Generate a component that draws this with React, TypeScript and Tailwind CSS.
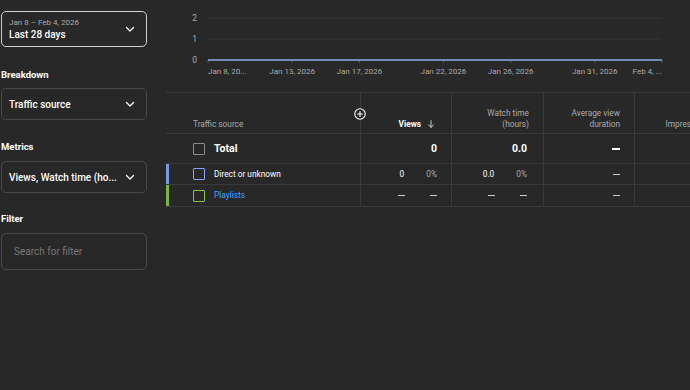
import React from 'react';

const Chevron = () => (
  <svg width="12" height="12" viewBox="0 0 24 24" fill="none" stroke="#fff" strokeWidth="2.5" strokeLinecap="round" strokeLinejoin="round">
    <path d="M5 9l7 7 7-7" />
  </svg>
);

const SelectBox = ({ children, className = '' }: { children: React.ReactNode; className?: string }) => (
  <div className={`flex items-center justify-between rounded-[5px] border pl-[7px] pr-[10px] ${className}`}>
    <div className="whitespace-nowrap">{children}</div>
    <Chevron />
  </div>
);

const Sidebar = () => (
  <aside className="w-[147px] shrink-0 pl-px pt-[11px]">
    <SelectBox className="h-[36px] border-[#d0d0d0]">
      <div className="text-[8px] leading-[11px] text-[#aaaaaa]">Jan 8 – Feb 4, 2026</div>
      <div className="text-[10px] leading-[14px] font-medium text-white">Last 28 days</div>
    </SelectBox>

    <div className="mt-[21px] text-[9.5px] font-bold text-white leading-[14px]">Breakdown</div>
    <SelectBox className="mt-[6px] h-[32px] border-[#4a4a4a]">
      <div className="text-[10px] font-medium text-white">Traffic source</div>
    </SelectBox>

    <div className="mt-[20px] text-[9.5px] font-bold text-white leading-[14px]">Metrics</div>
    <SelectBox className="mt-[7px] h-[32px] border-[#4a4a4a]">
      <div className="text-[10px] font-medium text-white">Views, Watch time (ho...</div>
    </SelectBox>

    <div className="mt-[19px] text-[9.5px] font-bold text-white leading-[14px]">Filter</div>
    <div className="mt-[7px] flex h-[37px] items-center rounded-[5px] border border-[#4a4a4a] pl-3">
      <span className="text-[10px] text-[#777777]">Search for filter</span>
    </div>
  </aside>
);

const x0 = 42;
const dayW = (496 - 42) / 27;
const ticks = [0, 5, 9, 14, 18, 23, 27];
const labels = [
  { d: 0, t: 'Jan 8, 20...', a: 'start' },
  { d: 5, t: 'Jan 13, 2026', a: 'middle' },
  { d: 9, t: 'Jan 17, 2026', a: 'middle' },
  { d: 14, t: 'Jan 22, 2026', a: 'middle' },
  { d: 18, t: 'Jan 26, 2026', a: 'middle' },
  { d: 23, t: 'Jan 31, 2026', a: 'middle' },
  { d: 27, t: 'Feb 4, ...', a: 'end' },
];

const Chart = () => (
  <svg width="524" height="92" className="block" fontFamily="Roboto, sans-serif">
    {[{ v: '2', y: 18 }, { v: '1', y: 39 }].map((g) => (
      <g key={g.v}>
        <text x="31" y={g.y + 3} fontSize="8.5" fill="#aaaaaa" textAnchor="end">{g.v}</text>
        <line x1={x0} x2="496" y1={g.y} y2={g.y} stroke="#363636" strokeWidth="1" />
      </g>
    ))}
    <text x="31" y="63" fontSize="8.5" fill="#aaaaaa" textAnchor="end">0</text>
    {ticks.map((d) => (
      <line key={d} x1={x0 + d * dayW} x2={x0 + d * dayW} y1="60" y2="63" stroke="#555555" />
    ))}
    <line x1={x0} x2="496" y1="60" y2="60" stroke="#8fa8e8" strokeWidth="1.3" />
    {labels.map((l) => (
      <text key={l.t} x={x0 + l.d * dayW} y="74" fontSize="8" fill="#aaaaaa" textAnchor={l.a as any}>{l.t}</text>
    ))}
  </svg>
);

const cols = 'grid grid-cols-[194px_91px_92px_91px_91px]';
const cell = 'border-l border-[#3a3a3a] pr-[14px]';

const Dash = ({ big = false }: { big?: boolean }) => (
  <span className={`inline-block ${big ? 'h-[2px] w-[8px] bg-white' : 'h-px w-[7px] bg-[#cccccc]'} align-middle`} />
);

const Checkbox = ({ color }: { color: string }) => (
  <span className={`block h-[12px] w-[12px] rounded-[1px] border-[1.5px] ${color}`} />
);

const Table = () => (
  <div className="w-[560px] border-t border-[#3a3a3a] text-[8.3px]">
    {/* header */}
    <div className={`${cols} h-[41px] border-b border-[#3a3a3a]`}>
      <div className="relative flex items-end pb-[3px] pl-[27px] text-[#aaaaaa]">
        Traffic source
        <svg className="absolute right-[-6px] top-[15px] z-10 bg-[#282828]" width="12" height="12" viewBox="0 0 24 24" fill="none" stroke="#fff" strokeWidth="2.2" strokeLinecap="round">
          <circle cx="12" cy="12" r="10.5" />
          <path d="M12 7v10M7 12h10" />
        </svg>
      </div>
      <div className={`${cell} flex items-end justify-end gap-[5px] pb-[3px] pr-[15px]`}>
        <span className="font-bold text-white">Views</span>
        <svg className="mb-[1px]" width="10" height="10" viewBox="0 0 24 24" fill="none" stroke="#dddddd" strokeWidth="2.2" strokeLinecap="round" strokeLinejoin="round">
          <path d="M12 4v16M6 14l6 6 6-6" />
        </svg>
      </div>
      <div className={`${cell} flex items-end justify-end pb-[3px] text-right leading-[11px] text-[#aaaaaa]`}>
        Watch time<br />(hours)
      </div>
      <div className={`${cell} flex items-end justify-end pb-[3px] text-right leading-[11px] text-[#aaaaaa]`}>
        Average view<br />duration
      </div>
      <div className={`${cell} flex items-end justify-end pb-[3px] text-[#aaaaaa]`}>Impressions</div>
    </div>

    {/* total */}
    <div className={`${cols} h-[30px] border-b border-[#3a3a3a]`}>
      <div className="flex items-center gap-[9px] pl-[27px]">
        <Checkbox color="border-[#8a8a8a]" />
        <span className="text-[10.5px] font-bold text-white">Total</span>
      </div>
      <div className={`${cell} flex items-center justify-end text-[10.5px] font-bold text-white`}>0</div>
      <div className={`${cell} flex items-center justify-end pr-[16px] text-[10.5px] font-bold text-white`}>0.0</div>
      <div className={`${cell} flex items-center justify-end`}><Dash big /></div>
      <div className={cell} />
    </div>

    {/* direct */}
    <div className={`${cols} h-[21px] border-b border-[#3a3a3a]`}>
      <div className="flex items-center gap-[9px] border-l-[3px] border-[#7d95e6] pl-[24px]">
        <Checkbox color="border-[#8ea6ef]" />
        <span className="text-white">Direct or unknown</span>
      </div>
      <div className={`${cell} flex items-center justify-end`}>
        <span className="text-white">0</span>
        <span className="ml-[22px] text-[#aaaaaa]">0%</span>
      </div>
      <div className={`${cell} flex items-center justify-end pr-[16px]`}>
        <span className="text-white">0.0</span>
        <span className="ml-[22px] text-[#aaaaaa]">0%</span>
      </div>
      <div className={`${cell} flex items-center justify-end`}><Dash /></div>
      <div className={cell} />
    </div>

    {/* playlists */}
    <div className={`${cols} h-[22px] border-b border-[#3a3a3a]`}>
      <div className="flex items-center gap-[9px] border-l-[3px] border-[#7cb342] pl-[24px]">
        <Checkbox color="border-[#8bc34a]" />
        <span className="text-[#3ea6ff]">Playlists</span>
      </div>
      <div className={`${cell} flex items-center justify-end gap-[25px]`}>
        <Dash /><Dash />
      </div>
      <div className={`${cell} flex items-center justify-end gap-[25px] pr-[16px]`}>
        <Dash /><Dash />
      </div>
      <div className={`${cell} flex items-center justify-end`}><Dash /></div>
      <div className={cell} />
    </div>
  </div>
);

export default function App() {
  return (
    <div className="flex h-[390px] w-[690px] overflow-hidden bg-[#282828] font-['Roboto',sans-serif]">
      <Sidebar />
      <main className="ml-[19px] flex-1 overflow-hidden">
        <Chart />
        <Table />
      </main>
    </div>
  );
}
